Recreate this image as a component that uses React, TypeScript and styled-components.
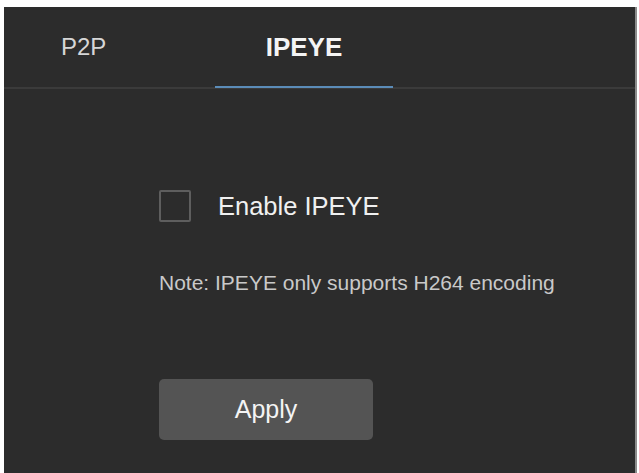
import React, { useState } from "react";
import styled, { createGlobalStyle } from "styled-components";

const GlobalStyle = createGlobalStyle`
  html, body {
    margin: 0;
    padding: 0;
    background: #ffffff;
  }
  body {
    font-family: "Liberation Sans", Arial, sans-serif;
  }
`;

const Page = styled.div`
  padding: 7px 2px 0 4px;
  height: 473px;
  box-sizing: border-box;
  display: flex;
`;

const Panel = styled.div`
  flex: 1;
  background: #2c2c2c;
  border-right: 2px solid #8c8c8c;
  display: flex;
  flex-direction: column;
`;

const TabBar = styled.div`
  display: flex;
  height: 80px;
  border-bottom: 2px solid #3b3b3b;
`;

const Tab = styled.div<{ $active?: boolean; $width: number; $pad: number }>`
  width: ${(p) => p.$width}px;
  padding-left: ${(p) => p.$pad}px;
  box-sizing: border-box;
  display: flex;
  align-items: center;
  justify-content: ${(p) => (p.$pad > 0 ? "flex-start" : "center")};
  font-size: ${(p) => (p.$active ? 26 : 24)}px;
  font-weight: ${(p) => (p.$active ? 700 : 400)};
  color: ${(p) => (p.$active ? "#f4f4f4" : "#d6d6d6")};
  position: relative;
  cursor: pointer;

  &::after {
    content: "";
    display: ${(p) => (p.$active ? "block" : "none")};
    position: absolute;
    left: 0;
    right: 0;
    bottom: -1px;
    height: 2px;
    background: #5b8cb8;
  }
`;

const Body = styled.div`
  padding: 101px 0 0 155px;
  display: flex;
  flex-direction: column;
`;

const CheckRow = styled.label`
  display: flex;
  align-items: center;
  gap: 27px;
  cursor: pointer;
`;

const Box = styled.span<{ $checked: boolean }>`
  width: 32px;
  height: 32px;
  box-sizing: border-box;
  border: 2px solid #5e5e5e;
  border-radius: 2px;
  display: flex;
  align-items: center;
  justify-content: center;
  background: ${(p) => (p.$checked ? "#5b8cb8" : "transparent")};
`;

const Label = styled.span`
  font-size: 25.5px;
  color: #f0f0f0;
`;

const Note = styled.div`
  margin-top: 49px;
  font-size: 21px;
  color: #c9c9c9;
`;

const ApplyButton = styled.button`
  margin-top: 84px;
  width: 214px;
  height: 61px;
  border: none;
  border-radius: 5px;
  background: #545454;
  color: #f4f4f4;
  font-family: "Liberation Sans", Arial, sans-serif;
  font-size: 25px;
  cursor: pointer;
`;

export default function App() {
  const [enabled, setEnabled] = useState(false);
  return (
    <>
      <GlobalStyle />
      <Page>
        <Panel>
          <TabBar>
            <Tab $width={211} $pad={57}>P2P</Tab>
            <Tab $width={178} $pad={0} $active>
              IPEYE
            </Tab>
          </TabBar>
          <Body>
            <CheckRow onClick={() => setEnabled(!enabled)}>
              <Box $checked={enabled} />
              <Label>Enable IPEYE</Label>
            </CheckRow>
            <Note>Note: IPEYE only supports H264 encoding</Note>
            <ApplyButton>Apply</ApplyButton>
          </Body>
        </Panel>
      </Page>
    </>
  );
}
